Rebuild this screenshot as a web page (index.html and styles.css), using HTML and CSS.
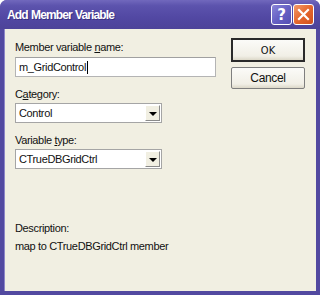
FILE: index.html
```html
<!DOCTYPE html>
<html lang="en">
<head>
    <meta charset="UTF-8">
    <title>Add Member Variable</title>
    <link rel="stylesheet" href="styles.css">
</head>
<body>
    <div class="window">
        <div class="titlebar">
            <span class="title">Add Member Variable</span>
            <div class="caption-buttons">
                <span class="cap-btn help">?</span>
                <span class="cap-btn close">
                    <svg width="13" height="13" viewBox="0 0 13 13">
                        <path d="M2 2 L11 11 M11 2 L2 11" stroke="#fff" stroke-width="2.2" stroke-linecap="square"/>
                    </svg>
                </span>
            </div>
        </div>
        <div class="client">
            <div class="form">
                <div class="label first">Member variable <u>n</u>ame:</div>
                <div class="textbox">m_GridControl<span class="caret"></span></div>

                <div class="label">C<span class="ul">a</span>tegory:</div>
                <div class="combo">
                    <span class="combo-value">Control</span>
                    <span class="drop"><span class="arrow"></span></span>
                </div>

                <div class="label">Variable <u>t</u>ype:</div>
                <div class="combo">
                    <span class="combo-value">CTrueDBGridCtrl</span>
                    <span class="drop"><span class="arrow"></span></span>
                </div>
            </div>
            <div class="buttons">
                <div class="btn default">OK</div>
                <div class="btn">Cancel</div>
            </div>
            <div class="description">
                <div>Description:</div>
                <div class="desc-text">map to CTrueDBGridCtrl member</div>
            </div>
        </div>
    </div>
</body>
</html>
```

FILE: styles.css
```css
html, body {
    margin: 0;
    padding: 0;
    background: #ffffff;
}

body {
    font-family: "Liberation Sans", Arial, sans-serif;
    font-size: 11px;
    letter-spacing: -0.35px;
    color: #111;
}

.window {
    width: 320px;
    height: 295px;
    box-sizing: border-box;
    background: #5249a0;
    border-radius: 7px 7px 0 0;
    padding: 0 4px 4px 4px;
    display: flex;
    flex-direction: column;
}

.titlebar {
    height: 29px;
    margin: 0 -4px;
    padding: 0 4px 0 7px;
    border-radius: 7px 7px 0 0;
    background: linear-gradient(#7168bd 0%, #5c53ad 20%, #5248a3 60%, #4d4399 100%);
    display: flex;
    align-items: center;
    justify-content: space-between;
}

.title {
    color: #fff;
    font-family: "Liberation Sans", Arial, sans-serif;
    font-weight: bold;
    font-size: 12px;
    letter-spacing: -0.9px;
    word-spacing: 1px;
    text-shadow: 1px 1px 0 #3a3080;
    padding-top: 1px;
}

.caption-buttons {
    display: flex;
    gap: 1px;
    margin-right: 2px;
}

.cap-btn {
    width: 19px;
    height: 19px;
    border: 1px solid #fff;
    border-radius: 3px;
    display: flex;
    align-items: center;
    justify-content: center;
    color: #fff;
    font-family: "DejaVu Sans", sans-serif;
    font-weight: bold;
    font-size: 15px;
    letter-spacing: 0;
}

.help {
    background: linear-gradient(135deg, #8a86d8 0%, #6660c4 50%, #554eb3 100%);
}

.close {
    background: linear-gradient(135deg, #f39a6a 0%, #e5672e 50%, #d1501c 100%);
}

.client {
    flex: 1;
    background: #f1efe2;
    border-left: 1px solid #8d86c7;
    display: grid;
    grid-template-columns: 216px 1fr;
    grid-template-rows: auto 1fr;
    padding-left: 10px;
}

.label {
    height: 13px;
    line-height: 13px;
    margin-top: 11px;
}

.label.first {
    margin-top: 12px;
}

.ul {
    text-decoration: underline;
}

.textbox {
    margin-top: 3px;
    height: 18px;
    width: 196px;
    background: #fff;
    border: 1px solid #b4b4b4;
    border-top-color: #a0a0a0;
    line-height: 18px;
    padding-left: 3px;
    box-sizing: content-box;
}

.caret {
    display: inline-block;
    width: 1px;
    height: 13px;
    background: #000;
    vertical-align: -3px;
    margin-left: 1px;
}

.combo {
    margin-top: 2px;
    width: 145px;
    height: 18px;
    background: #fff;
    border: 1px solid #a5a5a5;
    display: flex;
    align-items: center;
    justify-content: space-between;
}

.combo-value {
    padding-left: 3px;
}

.drop {
    width: 15px;
    height: 16px;
    margin-right: 1px;
    background: #f1efe2;
    border: 1px solid;
    border-color: #fff #8a8a8a #8a8a8a #fff;
    box-sizing: border-box;
    display: flex;
    align-items: center;
    justify-content: center;
}

.arrow {
    width: 0;
    height: 0;
    border-left: 4px solid transparent;
    border-right: 4px solid transparent;
    border-top: 4px solid #000;
    margin-top: 1px;
}

.buttons {
    padding-top: 9px;
    display: flex;
    flex-direction: column;
    gap: 5px;
}

.btn {
    width: 74px;
    height: 22px;
    box-sizing: border-box;
    border: 1px solid #7f7f7f;
    border-radius: 2px;
    background: linear-gradient(#fbfbf8, #f1efe6 80%, #dcd8c8);
    display: flex;
    align-items: center;
    justify-content: center;
    font-size: 12px;
}

.btn.default {
    border: 2px solid #2a2a2a;
    height: 24px;
    width: 74px;
    border-radius: 0;
    font-family: "DejaVu Sans Condensed", sans-serif;
    font-size: 11px;
    letter-spacing: 0;
}

.description {
    grid-column: 1 / span 2;
    align-self: end;
    padding-bottom: 39px;
}

.desc-text {
    margin-top: 6px;
}
```
